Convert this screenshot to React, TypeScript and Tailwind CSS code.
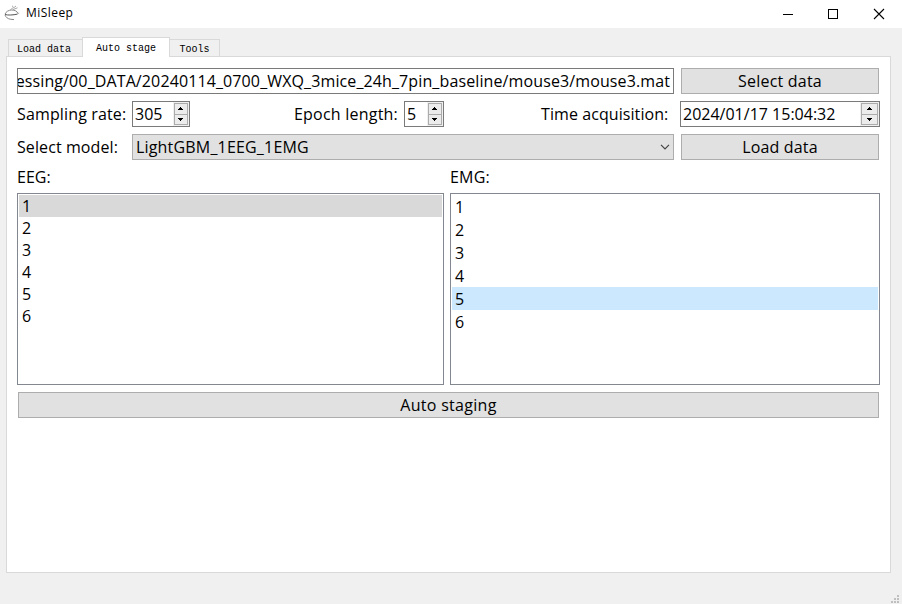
import type { ReactNode } from "react";

function AppIcon() {
  return (
    <svg width="16" height="16" viewBox="0 0 16 16" fill="none" stroke="#888" strokeWidth="1">
      <path d="M1 9.200C2 6.500 4.500 5.200 7.500 5c3.500 0 5.500 1.200 6.300 3.200" />
      <path d="M1 9.500c3 .9 8 .6 12.500-.4" stroke="#555" />
      <path d="M1 10c.8 2.300 2.800 3.900 5.800 4.300l3.200.3" />
      <path d="M13.400 8.500l1.800-.3" stroke="#aaa" />
      <path d="M8 .8l1.500 1.400M6.500 4.800c.8-1.300 2.500-1.800 4-2.600l1.500-1.200M9 4.600l4.500-1.800" stroke="#a5a5a5" />
    </svg>
  );
}

function TitleBar() {
  return (
    <header className="flex h-[28px] items-center bg-white pl-[4px]">
      <div className="mt-[-3px]"><AppIcon /></div>
      <span className="ml-[6px] mt-[-2px] text-[12px] leading-4 tracking-[0.45px]">MiSleep</span>
      <div className="ml-auto flex items-center pr-[17px]">
        <svg width="12" height="12" viewBox="0 0 12 12" shapeRendering="crispEdges" className="mr-[33px]">
          <path d="M1 6h10v1H1z" />
        </svg>
        <svg width="12" height="12" viewBox="0 0 12 12" fill="none" stroke="#000" shapeRendering="crispEdges" className="mr-[34px]">
          <path d="M1.500 1.500h9v9h-9z" />
        </svg>
        <svg width="12" height="12" viewBox="0 0 12 12" fill="none" stroke="#000" strokeWidth="1.100">
          <path d="M1 1l10 10M11 1L1 11" />
        </svg>
      </div>
    </header>
  );
}

function StepperButtons({ wide }: { wide: boolean }) {
  return wide ? (
    <svg width="19" height="24" viewBox="0 0 19 24" shapeRendering="crispEdges" className="shrink-0">
      <path d="M0 0h19v24H0z" fill="#f0f0f0" />
      <path d="M1.500 1.500h16v11h-16zM1.500 12.500h16v10h-16z" fill="#ececec" stroke="#acacac" />
      <path d="M9 5h1v1h1v1h1v1H7V7h1V6h1zM7 16h5v1h-1v1h-1v1H9v-1H8v-1H7z" />
    </svg>
  ) : (
    <svg width="16" height="24" viewBox="0 0 16 24" shapeRendering="crispEdges" className="shrink-0">
      <path d="M0 0h16v24H0z" fill="#f0f0f0" />
      <path d="M1.500 1.500h13v11h-13zM1.500 12.500h13v10h-13z" fill="#ececec" stroke="#acacac" />
      <path d="M7 5h1v1h1v1h1v1H5V7h1V6h1zM5 16h5v1H9v1H8v1H7v-1H6v-1H5z" />
    </svg>
  );
}

function SpinBox({ value, className, wide = false }: { value: string; className: string; wide?: boolean }) {
  return (
    <div className={`flex h-[26px] items-center justify-between border border-[#7a7a7a] bg-white pl-[2px] ${className}`}>
      <span>{value}</span>
      <StepperButtons wide={wide} />
    </div>
  );
}

function Button({ children, className }: { children: ReactNode; className: string }) {
  return (
    <button className={`flex h-[26px] items-center justify-center border border-[#adadad] bg-[#e1e1e1] ${className}`}>
      {children}
    </button>
  );
}

const channels = [1, 2, 3, 4, 5, 6];

function ChannelList({ selected, className, row, highlight }: { selected: number; className: string; row: string; highlight: string }) {
  return (
    <ul className={`h-[192px] border border-[#828790] p-px ${className}`}>
      {channels.map((n) => (
        <li key={n} className={`pl-[3px] ${row} ${n === selected ? highlight : ""}`}>
          {n}
        </li>
      ))}
    </ul>
  );
}

export default function App() {
  return (
    <div className="flex h-[604px] w-[902px] flex-col overflow-hidden bg-[#f0f0f0] font-['Open_Sans','Noto_Sans',sans-serif] text-black">
      <TitleBar />
      <nav className="flex h-[28px] shrink-0 items-end pl-[8px] font-['Liberation_Mono',monospace] text-[10px]">
        <div className="flex h-[17px] w-[74px] items-center border border-b-0 border-r-0 border-[#d9d9d9] pl-[8px] pt-[2px]">Load data</div>
        <div className="z-10 mb-[-1px] flex h-[20px] w-[88px] items-center justify-center border border-b-0 border-[#d9d9d9] bg-white pt-px">Auto stage</div>
        <div className="flex h-[17px] w-[50px] items-center justify-center border border-b-0 border-l-0 border-[#d9d9d9] pt-[2px]">Tools</div>
      </nav>
      <main className="ml-[6px] h-[517px] w-[885px] shrink-0 border border-[#d9d9d9] bg-white pl-[10px] pr-[10px] pt-[11px] text-[16px] leading-[24px]">
        <div className="flex h-[26px] gap-[7px]">
          <div className="flex w-[657px] items-center justify-end overflow-hidden whitespace-nowrap border border-[#7a7a7a] pr-[3px]">
            <span className="tracking-[0.115px]">essing/00_DATA/20240114_0700_WXQ_3mice_24h_7pin_baseline/mouse3/mouse3.mat</span>
          </div>
          <Button className="w-[198px]"><span className="tracking-[0.2px]">Select data</span></Button>
        </div>
        <div className="mt-[7px] flex h-[26px] items-center whitespace-nowrap">
          <div className="w-[115px]"><span className="tracking-[0.14px]">Sampling rate:</span></div>
          <SpinBox value="305" className="w-[58px]" />
          <div className="ml-[104px] w-[110px]"><span className="tracking-[0.22px]">Epoch length:</span></div>
          <SpinBox value="5" className="w-[40px]" />
          <div className="ml-[97px] w-[139px]"><span className="tracking-[0.08px]">Time acquisition:</span></div>
          <SpinBox value="2024/01/17 15:04:32" className="w-[200px]" wide />
        </div>
        <div className="mt-[7px] flex h-[26px] items-center">
          <div className="w-[115px]"><span className="tracking-[0.09px]">Select model:</span></div>
          <div className="flex h-[26px] w-[542px] items-center justify-between border border-[#adadad] bg-[#e1e1e1] pl-[3px] pr-[3px]">
            <span className="tracking-[0.18px]">LightGBM_1EEG_1EMG</span>
            <svg width="10" height="6" viewBox="0 0 10 6" fill="none" stroke="#444" strokeWidth="1.200">
              <path d="M1 .8l4 4 4-4" />
            </svg>
          </div>
          <Button className="ml-[7px] w-[198px]"><span className="tracking-[0.15px]">Load data</span></Button>
        </div>
        <div className="mt-[5px] flex h-[28px]">
          <div className="w-[433px]"><span>EEG:</span></div>
          <div><span className="tracking-[0.2px]">EMG:</span></div>
        </div>
        <div className="flex gap-[6px]">
          <ChannelList selected={1} className="w-[427px]" row="h-[22px] leading-[22px]" highlight="bg-[#d9d9d9]" />
          <ChannelList selected={5} className="w-[430px]" row="h-[23px] leading-[25px]" highlight="bg-[#cce8ff]" />
        </div>
        <Button className="ml-px mt-[7px] w-[861px]"><span className="tracking-[0.3px]">Auto staging</span></Button>
      </main>
      <footer className="mt-auto flex h-[9px] justify-end pr-[3px]">
        <svg width="8" height="8" viewBox="0 0 8 8" fill="#bfbfbf" shapeRendering="crispEdges">
          <path d="M6 0h2v2H6zM3 3h2v2H3zM6 3h2v2H6zM0 6h2v2H0zM3 6h2v2H3zM6 6h2v2H6z" />
        </svg>
      </footer>
    </div>
  );
}
